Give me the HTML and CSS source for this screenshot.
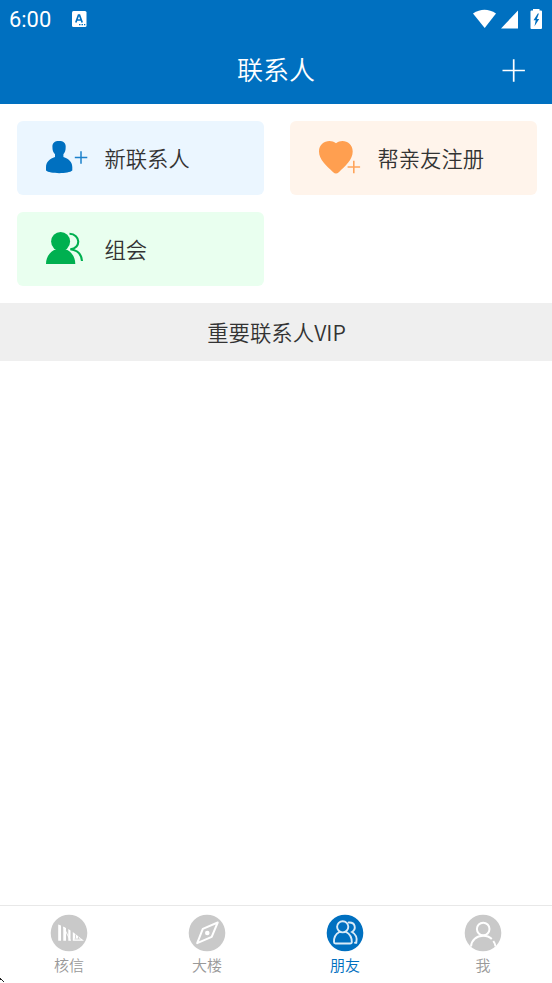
FILE: index.html
```html
<!DOCTYPE html>
<html lang="zh-CN">
<head>
<meta charset="utf-8">
<title>联系人</title>
<link rel="stylesheet" href="styles.css">
</head>
<body>
<div class="app">
  <header class="top">
    <div class="status">
      <span class="time">6:00</span>
      <svg class="badge" width="15" height="16" viewBox="0 0 15 16"><rect width="14.5" height="16" rx="1.5" fill="#fff"/><path d="M3.800 11.500 6.500 4h1l2.700 7.500M4.800 9h4.400" fill="none" stroke="#0070c0" stroke-width="1.700"/><path d="M7 13.600h1.500m1 0H11m1 0h1.300" stroke="#0070c0" stroke-width="1.400"/></svg>
      <svg class="signals" width="72" height="22" viewBox="472 7 72 22" fill="#fff"><path d="M473 12.500Q484.500 5 496 12.500L484.700 27Z"/><path d="M518 9.500V27.500H501Z"/><path d="M533 9.500V8h6.500v1.500H541a1 1 0 0 1 1 1V27a1 1 0 0 1-1 1h-9.500a1 1 0 0 1-1-1V10.500a1 1 0 0 1 1-1Z"/><path d="M537.800 12.500 533.500 19.300h2.200l-1.200 6 4.700-7.300h-2.300l2-5.500Z" fill="#0070c0"/></svg>
    </div>
    <div class="titlebar">
      <h1>联系人</h1>
      <svg class="add" width="24" height="24" viewBox="0 0 24 24"><path d="M11.700 .3v22.400M.5 11.500h22.400" stroke="#fff" stroke-width="1.700"/></svg>
    </div>
  </header>
  <main>
    <section class="cards">
      <a class="card blue">
        <svg width="44" height="36" viewBox="45 139 44 36"><path d="M59 141C63.500 141 65.700 143 65.700 146.500C65.700 150.500 65 152.500 63.400 154.200V157C68.500 158.500 72.300 162 72.300 167V170.500C69 174 49.500 174 46 170.500V167C46 162 50 158.500 55 157V154.200C53.200 152.500 52.400 150.500 52.400 146.500C52.400 143 54.600 141 59 141Z" fill="#0070c0"/><path d="M81 151.200v12.600M74.800 157.500h12.500" stroke="#1c81cb" stroke-width="1.500"/></svg>
        <span>新联系人</span>
      </a>
      <a class="card orange">
        <svg width="44" height="36" viewBox="318 139 44 36"><path d="M336 143.200C342.500 138.500 352.700 142 352.700 151.500C352.700 159.500 345.500 166 338.800 172.200Q336 174.600 333.200 172.200C326.500 166 319 159.500 319 151.500C319 142 329.500 138.500 336 143.200Z" fill="#ff9f50"/><path d="M353.800 160.700v12.600M347.600 167h12.500" stroke="#ffa45b" stroke-width="1.600"/></svg>
        <span>帮亲友注册</span>
      </a>
      <a class="card green">
        <svg width="44" height="36" viewBox="45 230 44 36"><g fill="#00b050"><circle cx="60.600" cy="241.500" r="9.500"/><path d="M56 247h9.500v2.300C71 251.300 75.300 256.500 75.300 264H46C46 256.500 50.500 251.300 56 249.300Z"/></g><path d="M69.500 233.800C80.500 234 81.500 248.300 70.300 249.200C77 250 81.500 254 82 261" fill="none" stroke="#00b050" stroke-width="2.100"/></svg>
        <span>组会</span>
      </a>
    </section>
    <h2>重要联系人VIP</h2>
  </main>
  <nav>
    <a><svg width="38" height="38" viewBox="0 0 38 38"><circle cx="19" cy="19" r="18.300" fill="#c9c9c9"/><g fill="#fff"><path d="M8.200 10.500 11 11.600V26.700H8.200ZM13.300 12.600 16 14V26.700h-2.700ZM18.300 15 20.500 16.500V26.700H18.300ZM22.800 18 34 26.700H22.800Z"/></g><path d="M25.500 20.500v4M28.500 22.500v2.500M24.500 25h6" stroke="#c9c9c9" stroke-width=".8"/><path d="M13.500 13l7 13.700" stroke="#fff" stroke-width=".9"/></svg><span>核信</span></a>
    <a><svg width="38" height="38" viewBox="0 0 38 38"><circle cx="19" cy="19" r="18.300" fill="#c9c9c9"/><path d="M29.700 8.500 14.800 14.800 9.200 29.200 23.700 22.800Z" fill="none" stroke="#fff" stroke-width="2" stroke-linejoin="round"/><circle cx="19.300" cy="19" r="2.300" fill="#fff"/></svg><span>大楼</span></a>
    <a class="active"><svg width="38" height="38" viewBox="0 0 38 38"><circle cx="19" cy="19" r="18.300" fill="#0070c0"/><g fill="none" stroke="#d9ebf8" stroke-width="1.900" stroke-linecap="round"><circle cx="16.700" cy="12.800" r="5.600"/><path d="M13.500 18C9.500 20 7.800 23.500 8 28q0 1.500 1.500 1.500H24q1.800 0 1.800-1.500C25.800 23.500 24 20 20 18M22.700 8.500C29.500 8 30.500 15 26 18C29.500 20 31.500 24 30.300 28.800H29"/></g></svg><span>朋友</span></a>
    <a><svg width="38" height="38" viewBox="0 0 38 38"><circle cx="19" cy="19" r="18.300" fill="#c9c9c9"/><g fill="none" stroke="#fff" stroke-width="2"><circle cx="19.200" cy="15" r="6.300"/><path d="M7 32.500C7.500 26 12.500 21.800 19.200 21.800C23 21.800 25.700 23 27.800 25M29.300 27C30.600 28.700 31.300 30.500 31.500 32.500"/></g></svg><span>我</span></a>
  </nav>
  <svg class="corner" width="5" height="5" viewBox="0 0 5 5"><path d="M0 0h1v1h1v1H0ZM2 2h1v1H2ZM3 3h1v1H3Z" fill="#222"/></svg>
</div>
</body>
</html>
```
FILE: styles.css
```css
* { box-sizing: border-box; }
body { margin: 0; background: #fff; color: #333; font-family: "Noto Sans CJK SC", sans-serif; font-weight: 350; }
svg { display: block; flex: none; }
.app { position: relative; height: 983px; display: flex; flex-direction: column; overflow: hidden; }
.top { height: 104.300px; flex: none; background: #0070c0; color: #fff; }
.status { height: 37px; padding: 0 8px 0 9px; display: flex; align-items: center; }
.time { width: 63px; font: 450 21.900px/37px Roboto, sans-serif; padding-top: 1px; }
.signals { margin-left: auto; }
.titlebar { height: 67px; display: grid; grid-template-columns: 52px 1fr 52px; align-items: center; }
h1 { grid-column: 2; margin: 0; padding-bottom: 4px; font-size: 26px; font-weight: 350; line-height: 38px; text-align: center; }
.add { margin-left: 2px; }
main { flex: 1; }
.cards { display: grid; grid-template-columns: 247px 247px; gap: 17px 26px; padding: 17.200px 17px 16.700px; }
.card { height: 73.700px; padding: 0 28px; border-radius: 6px; display: flex; align-items: center; gap: 15.500px; font-size: 21.300px; line-height: 32px; }
.card svg { margin-bottom: 2px; }
.blue { background: #ebf6ff; }
.orange { background: #fff4eb; }
.green { background: #e9ffef; }
h2 { margin: 0; height: 58px; padding-left: 1px; background: #efefef; font-size: 21.400px; font-weight: 350; line-height: 57px; text-align: center; }
nav { height: 78px; border-top: 1px solid #e8e8e8; display: grid; grid-template-columns: repeat(4, 1fr); color: #999; font-size: 15px; line-height: 22px; }
nav a { display: flex; flex-direction: column; align-items: center; padding-top: 8px; }
nav span { margin-top: 1.500px; }
.active { color: #0070c0; }
.corner { position: absolute; left: 0; bottom: 0; }
```
